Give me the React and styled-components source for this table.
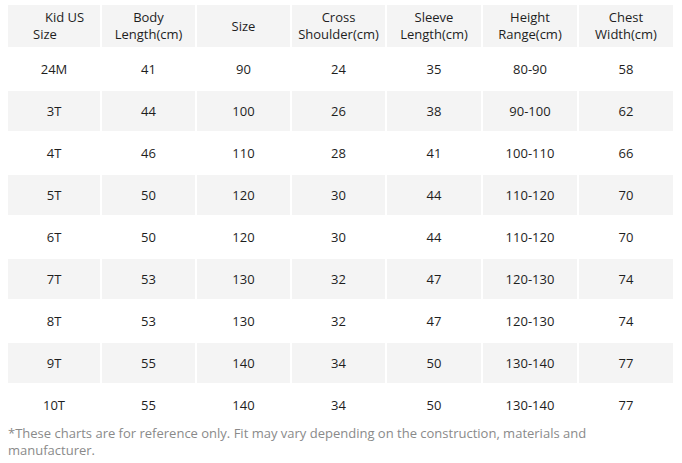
import React from "react";
import styled, { createGlobalStyle } from "styled-components";

const Global = createGlobalStyle`
  html, body { margin: 0; padding: 0; background: #fff; }
  body { font-family: "Open Sans", "Liberation Sans", sans-serif; }
`;

const Page = styled.div`
  padding: 5px 8px 0 8px;
  width: 666px;
`;

const Table = styled.div`
  display: grid;
  grid-template-columns: 92px 93px 93px 93px 94px 94px 94px;
  column-gap: 2px;
  row-gap: 2px;
`;

const Cell = styled.div`
  height: ${(p) => (p.$head ? "42px" : "40px")};
  background: ${(p) => (p.$shade ? "#f4f4f4" : "#fff")};
  display: flex;
  align-items: center;
  justify-content: center;
  text-align: center;
  font-size: 13px;
  line-height: 17px;
  color: #1e1e1e;
`;

const HeadLines = styled.div`
  display: flex;
  flex-direction: column;
  align-items: center;
`;

const IndentHead = styled.div`
  width: 100%;
  text-align: left;
  padding-left: 25px;
  text-indent: 12px;
  box-sizing: border-box;
`;

const Note = styled.p`
  margin: 0;
  font-size: 13px;
  line-height: 17px;
  color: #8a8a8a;
  width: 600px;
`;

const headers = [
  null,
  ["Body", "Length(cm)"],
  ["Size"],
  ["Cross", "Shoulder(cm)"],
  ["Sleeve", "Length(cm)"],
  ["Height", "Range(cm)"],
  ["Chest", "Width(cm)"],
];

const rows = [
  ["24M", "41", "90", "24", "35", "80-90", "58"],
  ["3T", "44", "100", "26", "38", "90-100", "62"],
  ["4T", "46", "110", "28", "41", "100-110", "66"],
  ["5T", "50", "120", "30", "44", "110-120", "70"],
  ["6T", "50", "120", "30", "44", "110-120", "70"],
  ["7T", "53", "130", "32", "47", "120-130", "74"],
  ["8T", "53", "130", "32", "47", "120-130", "74"],
  ["9T", "55", "140", "34", "50", "130-140", "77"],
  ["10T", "55", "140", "34", "50", "130-140", "77"],
];

export default function App() {
  return (
    <Page>
      <Global />
      <Table>
        <Cell $head $shade>
          <IndentHead>Kid US Size</IndentHead>
        </Cell>
        {headers.slice(1).map((h, i) => (
          <Cell key={i} $head $shade>
            <HeadLines>
              {h.map((line, j) => (
                <span key={j}>{line}</span>
              ))}
            </HeadLines>
          </Cell>
        ))}
        {rows.map((r, ri) =>
          r.map((v, ci) => (
            <Cell key={ri + "-" + ci} $shade={ri % 2 === 1}>
              {v}
            </Cell>
          ))
        )}
      </Table>
      <Note>
        *These charts are for reference only. Fit may vary depending on the
        construction, materials and manufacturer.
      </Note>
    </Page>
  );
}
